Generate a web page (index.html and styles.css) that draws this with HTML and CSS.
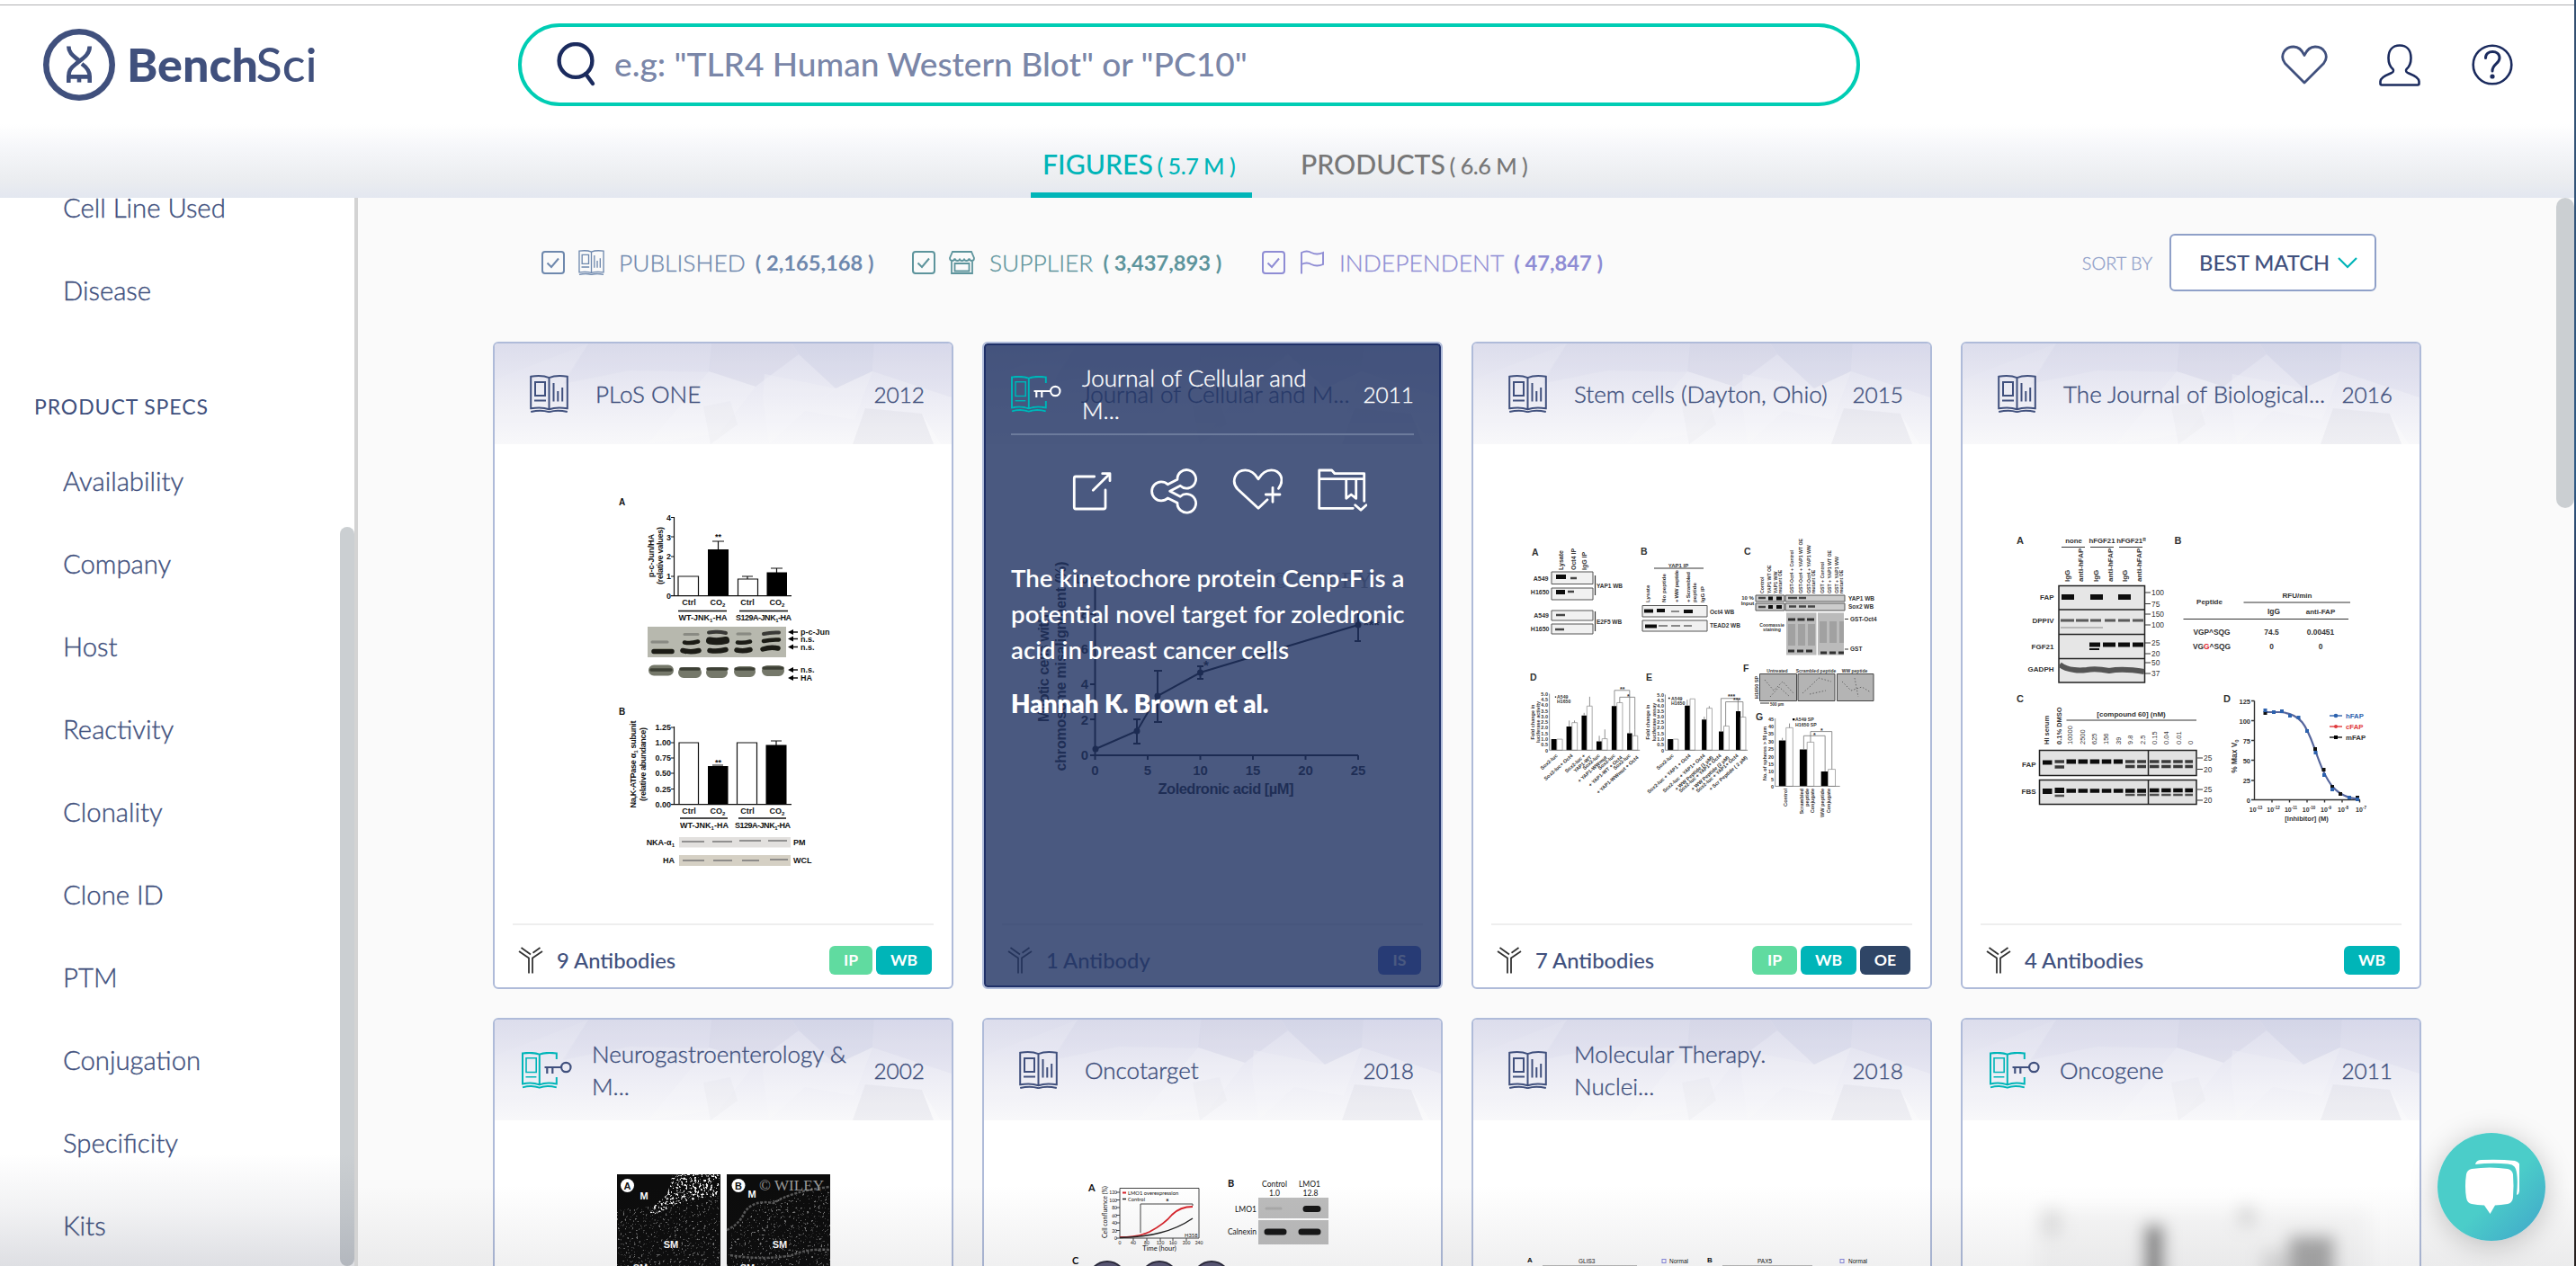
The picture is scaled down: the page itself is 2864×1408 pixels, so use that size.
FILE: index.html
```html
<!DOCTYPE html>
<html lang="en">
<head>
<meta charset="utf-8">
<title>BenchSci</title>
<link rel="stylesheet" href="styles.css">
</head>
<body>
<svg class="defs" width="0" height="0" aria-hidden="true">
  <symbol id="book" viewBox="0 0 43 42">
    <g fill="none" stroke="currentColor" stroke-width="2">
      <path d="M21.5 3.2C16 .8 8 .8 1.2 1.8V37.2C8 36.2 16 36.2 21.5 38.2C27 36.2 35 36.2 41.8 37.2V1.8C35 .8 27 .8 21.5 3.2V38"/>
      <path d="M1.2 41C8 39.4 16 39.4 21.5 41.2C27 39.4 35 39.4 41.8 41"/>
      <path d="M6 8H17V23H6ZM5 28.5H18M26.5 9V29.5M31.3 18V29.5M36.2 14V29.5"/>
    </g>
  </symbol>
  <symbol id="bookkey" viewBox="0 0 56 41">
    <g fill="none" stroke="#00b5b8" stroke-width="2">
      <path d="M38.8 8V1.4C32 .6 25 .6 19.8 2.6C14 .6 7 .6 1 1.4V35.4C7 34.2 14 34.2 19.8 36.4C25 34.2 32 34.2 38.8 35.4V28M19.8 2.6V36"/>
      <path d="M1 39.4C7 37.6 14 37.6 19.8 39.6C25 37.6 32 37.6 38.8 39.4"/>
      <path stroke-width="1.6" d="M5 6.8H16.2V22.5H5ZM4.5 27.8H16.4"/>
    </g>
    <g fill="none" stroke="currentColor" stroke-width="2.2">
      <circle cx="49.3" cy="17" r="5.2"/>
      <path d="M44 17H25.5M28.3 17V24M34.3 17V24"/>
    </g>
  </symbol>
  <symbol id="antibody" viewBox="0 0 28 30">
    <path fill="none" stroke="#333" stroke-width="1.8" d="M12 29.5V12.5L1 5M3.500 1L14 8.500M16 29.500V12.500L27 5M1.800 5.500L9 10.500M24.500 1L16.500 6.800"/>
  </symbol>
  <symbol id="facets" viewBox="0 0 508 112" preserveAspectRatio="none">
    <g opacity=".28">
      <path fill="#fff" opacity=".25" d="M104 0L60 73L0 112V40Z"/>
      <path fill="#c9cce2" opacity=".35" d="M104 0L75 45L150 30L241 32V0Z"/>
      <path fill="#b3b6d4" opacity=".5" d="M241 0L238 31L290 48L338 12L330 0Z"/>
      <path fill="#fff" opacity=".5" d="M238 31L290 48L250 100L170 112Z"/>
      <path fill="#fff" opacity=".5" d="M300 34L380 50L345 75L305 112L298 60Z"/>
      <path fill="#a9adcf" opacity=".5" d="M338 12L379 50L420 31L422 0H330Z"/>
      <path fill="#fff" opacity=".5" d="M379 50L420 31L400 85L345 75Z"/>
      <path fill="#b6bad8" opacity=".4" d="M422 0L420 31L508 60V0Z"/>
      <path fill="#c4c5d2" opacity=".6" d="M412 72L475 78L492 112H398Z"/>
      <path fill="#fff" d="M475 78L496 112H488Z"/>
      <path fill="#d0d1dd" opacity=".4" d="M232 70L262 64L270 90L240 112Z"/>
    </g>
  </symbol>
</svg>

<header class="header">
  <div class="window-edge"></div>
  <div class="topbar">
    <div class="logo">
      <svg width="312" height="84" viewBox="46 30 312 84" role="img" aria-label="BenchSci">
        <circle cx="88" cy="72" r="36.700" fill="none" stroke="#40507d" stroke-width="6.600"/>
        <g fill="none" stroke="#40507d" stroke-width="4.600">
          <path d="M76.300 51.500C76.300 60 83 63 88 67.500M99.700 51.500C99.700 62 90 66 84.500 71C78 76 76.300 79 76.300 85V92M91 71C96.500 75 99.700 79 99.700 85V92M76.300 85.400H99.700M88 85V91.500"/>
        </g>
        <g fill="#40507d" font-family="Lato, sans-serif" font-size="51.500">
          <text x="141" y="90.500" font-weight="900" textLength="146" lengthAdjust="spacingAndGlyphs">Bench</text>
          <text x="284.500" y="90.500" font-weight="500" textLength="68" lengthAdjust="spacingAndGlyphs">Sci</text>
        </g>
      </svg>
    </div>
    <div class="search">
      <svg width="46" height="50" viewBox="0 0 46 50"><circle cx="22" cy="20.500" r="18.400" fill="none" stroke="#1b2b5e" stroke-width="4.400"/><path d="M33 35L41 46" stroke="#1b2b5e" stroke-width="4.400" stroke-linecap="round"/></svg>
      <span class="placeholder">e.g: "TLR4 Human Western Blot" or "PC10"</span>
    </div>
    <nav class="actions">
      <svg width="52" height="44" viewBox="0 0 52 44"><path fill="none" stroke="#40507d" stroke-width="2.800" stroke-linejoin="round" d="M26 42L4.500 20.500C-2 12 4 2 14 2C20 2 23.500 6 26 11.500C28.500 6 32 2 38 2C48 2 54 12 47.500 20.500Z"/></svg>
      <svg width="46" height="47" viewBox="0 0 46 47"><path fill="none" stroke="#1b2b5e" stroke-width="2.600" stroke-linejoin="round" d="M23 1.500C31 1.500 35.500 7 35.500 15.500C35.500 21 33.500 25.500 30.500 28C29 30 30.500 31.500 33 32.500C38 34.500 44.500 37.500 44.500 41.500V44Q44.500 45.500 43 45.500H3Q1.500 45.500 1.500 44V41.500C1.500 37.500 8 34.500 13 32.500C15.500 31.500 17 30 15.500 28C12.500 25.500 10.500 21 10.500 15.500C10.500 7 15 1.500 23 1.500Z"/></svg>
      <svg width="46" height="46" viewBox="0 0 46 46"><g fill="none" stroke="#1b2b5e" stroke-width="2.600"><circle cx="23" cy="23" r="21.300"/><path stroke-width="3" stroke-linecap="round" d="M15.500 15.500C15.500 6 31 6 31 15.500C31 22 23 22 23 30"/></g><circle cx="23" cy="36" r="2.600" fill="#1b2b5e"/></svg>
    </nav>
  </div>
  <div class="tabs">
    <div class="tab tab-active">FIGURES <small>( 5.7 M )</small></div>
    <div class="tab">PRODUCTS <small>( 6.6 M )</small></div>
  </div>
</header>

<div class="body">
  <aside class="sidebar">
    <ul class="filters-list">
      <li>Cell Line Used</li>
      <li>Disease</li>
      <li class="group">PRODUCT SPECS</li>
      <li>Availability</li>
      <li>Company</li>
      <li>Host</li>
      <li>Reactivity</li>
      <li>Clonality</li>
      <li>Clone ID</li>
      <li>PTM</li>
      <li>Conjugation</li>
      <li>Specificity</li>
      <li>Kits</li>
    </ul>
    <div class="sidebar-thumb"></div>
    <div class="sidebar-fade"></div>
  </aside>

  <main class="main">
    <div class="toolbar">
      <div class="sources">
        <div class="source published">
          <svg width="26" height="26" viewBox="0 0 26 26"><path fill="none" stroke="currentColor" stroke-width="2" d="M4 1H22Q25 1 25 4V22Q25 25 22 25H4Q1 25 1 22V4Q1 1 4 1ZM6.500 13.500L11 18L19 8.500"/></svg>
          <svg width="29" height="28"><use href="#book"/></svg>
          <span>PUBLISHED</span><b>( 2,165,168 )</b>
        </div>
        <div class="source supplier">
          <svg width="26" height="26" viewBox="0 0 26 26"><path fill="none" stroke="currentColor" stroke-width="2" d="M4 1H22Q25 1 25 4V22Q25 25 22 25H4Q1 25 1 22V4Q1 1 4 1ZM6.500 13.500L11 18L19 8.500"/></svg>
          <svg width="29" height="28" viewBox="0 0 29 28"><path fill="none" stroke="currentColor" stroke-width="1.800" d="M4 2H25L28 9Q28 12 25.500 12Q23 12 22.500 9.500Q22 12 19.500 12Q17 12 17 9.500Q17 12 14.500 12Q12 12 12 9.500Q12 12 9.500 12Q7 12 6.500 9.500Q6 12 3.500 12Q1 12 1 9ZM3 12V26H26V12M6.500 15H22.500V23.500H6.500Z"/></svg>
          <span>SUPPLIER</span><b>( 3,437,893 )</b>
        </div>
        <div class="source independent">
          <svg width="26" height="26" viewBox="0 0 26 26"><path fill="none" stroke="currentColor" stroke-width="2" d="M4 1H22Q25 1 25 4V22Q25 25 22 25H4Q1 25 1 22V4Q1 1 4 1ZM6.500 13.500L11 18L19 8.500"/></svg>
          <svg width="29" height="28" viewBox="0 0 29 28"><path fill="none" stroke="currentColor" stroke-width="1.900" d="M3 26.500V3Q9 0 14 3Q20 6 27 3V16Q20 19 14 16Q9 13 3 16"/></svg>
          <span>INDEPENDENT</span><b>( 47,847 )</b>
        </div>
      </div>
      <div class="sort">
        <span class="sort-label">SORT BY</span>
        <div class="select">BEST MATCH
          <svg width="22" height="13" viewBox="0 0 22 13"><path fill="none" stroke="#00b5b8" stroke-width="2.200" d="M1 1L11 11L21 1"/></svg>
        </div>
      </div>
    </div>

    <div class="grid">
      <!-- PLoS ONE -->
      <article class="card">
        <div class="card-head">
          <svg class="facets"><use href="#facets"/></svg>
          <svg class="icon" width="43" height="42"><use href="#book"/></svg>
          <h3>PLoS ONE</h3><time>2012</time>
        </div>
        <svg class="figure" viewBox="550 494 508 533">
          <g stroke="#111" stroke-width="1.200" fill="none">
            <path d="M749.500 575V662.600H880M746 575.500H749.500M746 597H749.500M746 619H749.500M746 641H749.500M746 662.600H749.500M798.500 602V611M792 602H805M831 641V644M825 641H837M863.500 632V637M857 632H870"/>
            <path d="M754 662V641H776.500V662M820.500 662V644H842.500V662" fill="#fff"/>
            <path d="M754 679.500H808M822 679.500H876" stroke-width="1.500"/>
            <path d="M749.500 808V894.600H880M746 809H749.500M746 826H749.500M746 843H749.500M746 860H749.500M746 877.500H749.500M746 894.600H749.500M863 824V829M857 824H869M792 851H804"/>
            <path d="M755 894V826H776.500V894M819.500 894V826H841.500V894" fill="#fff"/>
            <path d="M756 910H809M821 910H874" stroke-width="1.500"/>
          </g>
          <path d="M787 611h23v51.600h-23zM852.500 636.500h22.500v26h-22.500zM787 852h22.500v42.600h-22.500zM851.500 828.500h23v66h-23z"/>
          <rect x="720" y="697" width="154" height="34" fill="#b7b8ae"/>
          <g filter="url(#soft)" stroke-linecap="round" fill="none" stroke="#1a1c16">
            <path stroke-width="5.500" d="M727 724.500H747M759 723.500Q768 726 777 723.500M789 723.500Q798 725 807 722.500M819 723Q827 724.500 834 722.500M848 722Q857 719 865 721"/>
            <path stroke-width="4.500" d="M761 714.500Q768 716 776 713.500M820 714.500Q827 715.500 834 713.500M849 713Q857 711 866 711.500"/>
            <path stroke-width="8" d="M789 712.500Q798 714 807 712"/>
            <path stroke-width="4" stroke-opacity=".8" d="M788 703.500Q798 702 807 704M849 705Q857 703 866 703.500"/>
            <path stroke-width="3" stroke-opacity=".3" d="M761 705.500H776M820 705H834M725 714H742"/>
          </g>
          <g filter="url(#soft)" stroke="#74786a" stroke-width="12" stroke-linecap="round">
            <path d="M727 745.500H743M760 748H774M791 748H803M822 747H834M853 746H866"/>
          </g>
          <g filter="url(#soft)" stroke="#3d4035" stroke-width="3.500" stroke-linecap="round" fill="none"><path d="M724 745H746M757 744H777M787 744H808M818 744H838M849 743H870"/></g>
          <path stroke="#111" stroke-width="1.300" d="M880 703H887M880 710.500H887M880 719.500H887M880 745H887M880 754H887"/>
          <path d="M876 703l6-3v6zM876 710.500l6-3v6zM876 719.500l6-3v6zM876 745l6-3v6zM876 754l6-3v6z"/>
          <rect x="755" y="931" width="124" height="11.500" fill="#e2e0de"/><rect x="755" y="951" width="124" height="12" fill="#d5d0c4"/>
          <path stroke="#777" stroke-width="1.500" filter="url(#soft)" d="M758 936H783M792 936H814M822 935H846M854 935H875M759 957H783M793 957H814M825 957H844M856 956H876"/>
          <g class="fig" font-size="9">
            <text x="688" y="562" font-size="10">A</text><text x="688" y="795" font-size="10">B</text>
            <g text-anchor="end"><text x="746" y="579">4</text><text x="746" y="600.500">3</text><text x="746" y="622">2</text><text x="746" y="644">1</text><text x="746" y="666">0</text>
            <text x="746" y="812">1.25</text><text x="746" y="829">1.00</text><text x="746" y="846">0.75</text><text x="746" y="863">0.50</text><text x="746" y="880.500">0.25</text><text x="746" y="898">0.00</text>
            <text x="750" y="940">NKA-α<tspan class="sub" dy="2">1</tspan></text><text x="750" y="960">HA</text></g>
            <g text-anchor="middle"><text x="798.500" y="600">**</text><text x="798.500" y="851">**</text>
            <text x="766" y="673">Ctrl</text><text x="798" y="673">CO<tspan class="sub" dy="2">2</tspan></text><text x="831" y="673">Ctrl</text><text x="864" y="673">CO<tspan class="sub" dy="2">2</tspan></text>
            <text x="781.500" y="690">WT-JNK<tspan class="sub" dy="2">1</tspan><tspan dy="-2">-HA</tspan></text><text x="849" y="690" textLength="62">S129A-JNK<tspan class="sub" dy="2">1</tspan><tspan dy="-2">-HA</tspan></text>
            <text x="766" y="905">Ctrl</text><text x="798" y="905">CO<tspan class="sub" dy="2">2</tspan></text><text x="831" y="905">Ctrl</text><text x="864" y="905">CO<tspan class="sub" dy="2">2</tspan></text>
            <text x="783" y="921">WT-JNK<tspan class="sub" dy="2">1</tspan><tspan dy="-2">-HA</tspan></text><text x="848" y="921" textLength="62">S129A-JNK<tspan class="sub" dy="2">1</tspan><tspan dy="-2">-HA</tspan></text>
            <text transform="translate(727 618) rotate(-90)">p-c-Jun/HA</text><text transform="translate(737 618) rotate(-90)" textLength="64">(relative values)</text>
            <text transform="translate(707 850) rotate(-90)" textLength="97">Na,K-ATPase α<tspan class="sub" dy="2">1</tspan><tspan dy="-2"> subunit</tspan></text><text transform="translate(718 850) rotate(-90)" textLength="82">(relative abundance)</text></g>
            <text x="890" y="706">p-c-Jun</text><text x="890" y="713.500">n.s.</text><text x="890" y="722.500">n.s.</text><text x="890" y="748">n.s.</text><text x="890" y="757">HA</text>
            <text x="882" y="940">PM</text><text x="882" y="960">WCL</text>
          </g>
        </svg>
        <div class="card-foot"><svg width="28" height="30"><use href="#antibody"/></svg><strong>9 Antibodies</strong><span class="tag ip">IP</span><span class="tag wb">WB</span></div>
      </article>

      <!-- Journal of Cellular and M... (hovered) -->
      <article class="card hovered">
        <div class="card-head key">
          <svg class="facets"><use href="#facets"/></svg>
          <svg class="icon" width="56" height="41"><use href="#bookkey"/></svg>
          <h3>Journal of Cellular and M...</h3><time>2011</time>
        </div>
        <svg class="figure" viewBox="1094 494 508 533">
          <g stroke="#000" stroke-width="2" fill="none">
            <path d="M1217.500 643V840H1510M1212 840H1217.500M1212 800H1217.500M1212 761H1217.500M1212 722H1217.500M1212 683H1217.500M1212 643H1217.500M1217.500 840V845M1276 840V845M1334.500 840V845M1393 840V845M1451.500 840V845M1510 840V845"/>
            <path d="M1218 833L1264 813L1287 774L1334.500 748L1510 695"/>
            <path d="M1264 800V827M1260 800H1268M1260 827H1268M1287 746V803M1283 746H1292M1283 803H1292M1334.500 741V755M1331 741H1338M1331 755H1338M1510 680V713M1506 713H1513"/>
          </g>
          <g><circle cx="1218" cy="833" r="3.500"/><circle cx="1264" cy="813" r="3.500"/><circle cx="1287" cy="774" r="3.500"/><circle cx="1334.500" cy="748" r="3.500"/><circle cx="1510" cy="695" r="3.500"/></g>
          <g class="fig" font-size="15">
            <g text-anchor="end"><text x="1210" y="845">0</text><text x="1210" y="806">2</text><text x="1210" y="766">4</text><text x="1210" y="727">6</text><text x="1210" y="688">8</text><text x="1210" y="649">10</text></g>
            <g text-anchor="middle"><text x="1217.500" y="862">0</text><text x="1276" y="862">5</text><text x="1334.500" y="862">10</text><text x="1393" y="862">15</text><text x="1451.500" y="862">20</text><text x="1510" y="862">25</text>
            <text x="1363" y="883" font-size="16.500" textLength="151">Zoledronic acid [µM]</text>
            <text transform="translate(1166 743) rotate(-90)" font-size="16" textLength="120">Mitotic cells with</text>
            <text transform="translate(1185 741) rotate(-90)" font-size="16" textLength="233">chromosome misalignment (%)</text></g>
            <text x="1338" y="745">*</text><text x="1516" y="700">***</text>
          </g>
          <text x="1414" y="654" font-family="Liberation Serif, serif" font-size="25" fill="#999" textLength="112">© WILEY</text>
        </svg>
        <div class="card-foot"><svg width="28" height="30"><use href="#antibody"/></svg><strong>1 Antibody</strong><span class="tag is">IS</span></div>
        <div class="overlay">
          <div class="overlay-head"><svg width="56" height="41"><use href="#bookkey"/></svg><h3>Journal of Cellular and<br>M...</h3><time>2011</time></div>
          <div class="overlay-actions">
            <svg width="50" height="54" viewBox="0 0 50 54"><path d="M26.700 10H6Q4.300 10 4.300 12V44Q4.300 46 6 46H37Q39 46 39 44V25M25.300 25.300L44 6.700M35.700 6.700H44V14.700"/></svg>
            <svg width="54" height="54" viewBox="0 0 54 54"><path d="M20.300 18.700L31 13.300A10.300 10.300 0 1 1 34.200 20.300L22.700 26.300L34.200 32.300A10.300 10.300 0 1 1 31 39.300L20.300 34A10.500 10.500 0 1 1 20.300 18.700Z"/></svg>
            <svg width="56" height="54" viewBox="0 0 56 54"><path d="M39 35.700L29 45.300L6 24C-2 15 4 2.800 14.500 2.800C21 2.800 25 6 29 12.700C33 6 37 2.800 43.500 2.800C53 2.800 59 13 51.500 23.300M45 22.300V38.300M37.300 30H53"/></svg>
            <svg width="56" height="54" viewBox="0 0 56 54"><path d="M40.300 45.300H2.700V3H16.700L20 6.700H52.700V37.300M2.700 12.700H52.700M32.700 12.700V34.300L38.200 30L43.700 34.300V12.700M42.700 41.700L49 47.300L55 41.700"/></svg>
          </div>
          <p class="overlay-title">The kinetochore protein Cenp-F is a<br>potential novel target for zoledronic<br>acid in breast cancer cells</p>
          <p class="overlay-author">Hannah K. Brown et al.</p>
        </div>
      </article>

      <!-- Stem cells -->
      <article class="card">
        <div class="card-head">
          <svg class="facets"><use href="#facets"/></svg>
          <svg class="icon" width="43" height="42"><use href="#book"/></svg>
          <h3>Stem cells (Dayton, Ohio)</h3><time>2015</time>
        </div>
        <svg class="figure" viewBox="1638 494 508 533">
          <g fill="#f1f1f1" stroke="#555" stroke-width="1">
            <path d="M1725 636h46v13.500h-46zM1725 654h46v13h-46zM1725 679h46v11h-46zM1725 694h46v11h-46zM1826 673.500h72v12.500h-72zM1826 690h72v12h-72z"/>
            <path fill="#ccc" d="M1952 662h32v7h-32zM1952 671h32v8h-32zM1985 662h66v7h-66zM1985 671h66v8h-66z"/>
          </g>
          <path fill="#bbb" d="M1986 681.500h33.500v47h-33.500zM2021 681.500h29v47h-29z"/>
          <g filter="url(#soft)">
            <path stroke="#333" stroke-width="3" stroke-dasharray="8 2.500" d="M1988 689H2018"/>
            <path stroke="#888" stroke-width="24" stroke-dasharray="8 3" opacity=".5" d="M1988 706H2018M2023 703H2050"/>
            <path stroke="#333" stroke-width="3" stroke-dasharray="7 3" d="M1988 724H2018M2024 726H2050"/>
            <path stroke="#111" stroke-width="5" d="M1730 641.500H1741M1730 658.500H1740"/>
            <path stroke="#444" stroke-width="2.400" d="M1746 643H1753M1743 658H1750M1730 684H1740M1729 700H1739M1955 665H1963M1955 675H1963M1988 665H1998M2000 665H2008M1989 674.500H1997M2000 674.500H2008M2010 674.500H2018"/>
            <path stroke="#111" stroke-width="4" d="M1828 679.500H1838M1829 696.500H1842M1842 679H1851M1872 680H1882M1966 665.500H1971M1975 665.500H1981M1966 675H1971M1975 675H1981"/>
            <path stroke="#888" stroke-width="2" d="M1844 696H1854M1858 680H1867M1858 696H1868M1872 696H1881"/>
          </g>
          <g stroke="#333" stroke-width="1.200"><path d="M1773.500 640V662M1773.500 680V702M1839 632H1894M2051 688.500H2055M2051 722H2055M1957 782H1967"/></g>
          <g fill="#b4b4b4" stroke="#444"><path d="M1956.500 749.500h41v30h-41zM1999 749.500h41v30h-41zM2042.500 749.500h40.500v30h-40.500z"/></g>
          <g fill="none" stroke="#333" stroke-width="1" stroke-dasharray="1.500 2" opacity=".6"><path d="M1962 756L1972 768L1982 758L1994 771M1968 775L1978 764L1990 775M2004 771L2014 762L2022 754L2036 758M2012 772L2030 768M2048 758L2058 768L2070 764L2080 770M2062 754L2066 775"/></g>
          <g transform="translate(1620 370) scale(.3444 .4719)">
            <path d="M304 958h18v26h-18zM353 928h18v56h-18zM402 902h17v82h-17zM450 963h17v21h-17zM499 880h17v104h-17zM549 944h16v40h-16zM680 958h18v26h-18zM735 879h17v105h-17zM790 912h16v72h-16zM845 940h15v44h-15zM900 892h15v92h-15zM1039 961h23v108h-23zM1106 982h24v87h-24zM1175 1034h22v35h-22zM316 857h4v3h-4zM682 860h5v3h-5zM1083 909h7v5h-7z"/>
            <g fill="#fff" stroke="#999" stroke-width="2"><path d="M322 958h18v26h-18zM371 919h17v65h-17zM419 880h17v104h-17zM468 957h17v27h-17zM516 872h18v112h-18zM566 950h17v34h-17zM698 958h16v26h-16zM752 863h16v121h-16zM806 885h17v99h-17zM861 927h17v57h-17zM915 906h17v78h-17zM1062 931h22v138h-22zM1130 965h22v104h-22zM1198 1029h23v40h-23z"/></g>
            <path fill="none" stroke="#777" stroke-width="2" d="M298 851V984H590M672 853V984H938M1027 909V1069H1236M362 914V928M379 914V919M428 858V880M410 896V902M459 950V963M477 935V957M508 843V880M508 843H557V935M525 859H574V935M525 859V872M557 935V944M574 935V950M743 865V879M798 905V912M814 880V885M852 862V940M852 862H907V892M867 870H923V906M867 870V927M1050 955V961M1073 921V931M1119 950V982M1119 950H1188V1034M1141 940H1210V1029M1141 940V965"/>
          </g>
          <g class="fig soft" font-size="7">
            <g font-size="10.500"><text x="1703" y="618">A</text><text x="1824" y="617">B</text><text x="1939" y="617">C</text><text x="1701" y="757">D</text><text x="1830" y="757">E</text><text x="1938" y="747">F</text><text x="1952" y="801">G</text></g>
            <g text-anchor="end"><text x="1721.500" y="646">A549</text><text x="1722.500" y="661">H1650</text><text x="1722" y="687">A549</text><text x="1722.500" y="702">H1650</text></g>
            <g font-size="6.500"><text x="1775" y="653.500">YAP1 WB</text><text x="1775" y="693.500">E2F5 WB</text><text x="1901" y="683">Oct4 WB</text><text x="1901" y="697.500">TEAD2 WB</text><text x="2055" y="668">YAP1 WB</text><text x="2055" y="676.500">Sox2 WB</text><text x="2057" y="691">GST-Oct4</text><text x="2057" y="724">GST</text></g>
            <text transform="translate(1738 634) rotate(-90)">Lysate</text><text transform="translate(1752 634) rotate(-90)">Oct4 IP</text><text transform="translate(1764 634) rotate(-90)">IgG IP</text>
            <g font-size="6.200"><text transform="translate(1834 670) rotate(-90)">Lysate</text><text transform="translate(1852 670) rotate(-90)">No peptide</text><text transform="translate(1866 670) rotate(-90)" textLength="36">+ WW peptide</text><text transform="translate(1879 670) rotate(-90)" textLength="34">+ Scrambled</text><text transform="translate(1886 670) rotate(-90)">peptide</text><text transform="translate(1895 670) rotate(-90)">IgG IP</text></g>
            <g font-size="5.200"><text transform="translate(1961 660) rotate(-90)">Control</text><text transform="translate(1969 660) rotate(-90)">YAP1 WT OE</text><text transform="translate(1976 660) rotate(-90)">YAP1 WW</text><text transform="translate(1981 660) rotate(-90)">mutant OE</text><text transform="translate(1994 660) rotate(-90)">GST-Oct4 + Control</text><text transform="translate(2004 660) rotate(-90)">GST-Oct4 + YAP1 WT OE</text><text transform="translate(2013 660) rotate(-90)">GST-Oct4 + YAP1 WW</text><text transform="translate(2018 660) rotate(-90)">mutant OE</text><text transform="translate(2028 660) rotate(-90)">GST + Control</text><text transform="translate(2036 660) rotate(-90)">GST + YAP1 WT OE</text><text transform="translate(2044 660) rotate(-90)">GST + YAP1 WW</text><text transform="translate(2049 660) rotate(-90)">mutant OE</text></g>
            <g text-anchor="middle" font-size="6"><text x="1866" y="631">YAP1 IP</text><text x="1943" y="667">10 %</text><text x="1943" y="673">Input</text><text x="1970" y="697" font-size="5.200">Coomassie</text><text x="1970" y="702" font-size="5.200">staining</text><text x="1976" y="747.500" font-size="5">Untreated</text><text x="2019" y="747.500" font-size="5">Scrambled peptide</text><text x="2062" y="747.500" font-size="5">WW peptide</text></g>
            <text transform="translate(1955 777) rotate(-90)" font-size="5.500">H1650 SP</text><text x="1968" y="785" font-size="4.500">500 µm</text>
            <g font-size="5.500" text-anchor="end"><text x="1721" y="773.500">5.0</text><text x="1721" y="780">4.5</text><text x="1721" y="786">4.0</text><text x="1721" y="792.500">3.5</text><text x="1721" y="799">3.0</text><text x="1721" y="805">2.5</text><text x="1721" y="811">2.0</text><text x="1721" y="817.500">1.5</text><text x="1721" y="824">1.0</text><text x="1721" y="830">0.5</text><text x="1721" y="836.500">0</text>
            <text x="1850" y="775">5.0</text><text x="1850" y="781">4.5</text><text x="1850" y="787">4.0</text><text x="1850" y="793">3.5</text><text x="1850" y="799">3.0</text><text x="1850" y="805">2.5</text><text x="1850" y="811">2.0</text><text x="1850" y="817.500">1.5</text><text x="1850" y="824">1.0</text><text x="1850" y="830">0.5</text><text x="1850" y="836.500">0</text>
            <text x="1972" y="801.500">45</text><text x="1972" y="810">40</text><text x="1972" y="818">35</text><text x="1972" y="826.500">30</text><text x="1972" y="835">25</text><text x="1972" y="843.500">20</text><text x="1972" y="851.500">15</text><text x="1972" y="860">10</text><text x="1972" y="868.500">5</text><text x="1972" y="877">0</text></g>
            <g font-size="5.200"><text x="1731" y="776.500">A549</text><text x="1731" y="782">H1650</text><text x="1858" y="778.500">A549</text><text x="1858" y="784">H1650</text><text x="1996" y="801.500">A549 SP</text><text x="1996" y="807.500">H1650 SP</text></g>
            <g font-size="5.500" text-anchor="middle"><text transform="translate(1706 803) rotate(-90)">Fold change in</text><text transform="translate(1712 803) rotate(-90)">luciferase activity</text><text transform="translate(1834 803) rotate(-90)">Fold change in</text><text transform="translate(1841 803) rotate(-90)">luciferase assay</text><text transform="translate(1964 838) rotate(-90)">No. of spheres &gt; 50 µm</text></g>
            <g font-size="5.600" text-anchor="end"><text transform="translate(1732 841) rotate(-42)">Sox2-luc</text><text transform="translate(1749 841) rotate(-42)">Sox2-luc+ Oct4</text><text transform="translate(1763 841) rotate(-42)">Sox2-luc +</text><text transform="translate(1770 843) rotate(-42)">YAP1-WT</text><text transform="translate(1779 841) rotate(-42)">Sox2-luc</text><text transform="translate(1787 843) rotate(-42)">+ YAP1-WWmut</text><text transform="translate(1796 841) rotate(-42)">Sox2-luc</text><text transform="translate(1804 843) rotate(-42)">+ YAP1-WT + Oct4</text><text transform="translate(1813 841) rotate(-42)">Sox2-luc</text><text transform="translate(1822 843) rotate(-42)">+ YAP1-WWmut + Oct4</text>
            <text transform="translate(1861 841) rotate(-42)">Sox2-luc</text><text transform="translate(1880 841) rotate(-42)">Sox2-luc + YAP1 + Oct4</text><text transform="translate(1896 841) rotate(-42)">Sox2-luc + YAP1+ Oct4</text><text transform="translate(1905 843) rotate(-42)">+ WW Peptide (1 µM)</text><text transform="translate(1914 841) rotate(-42)">Sox2-luc + YAP1+ Oct4</text><text transform="translate(1923 843) rotate(-42)">+ WW Peptide (2 µM)</text><text transform="translate(1933 841) rotate(-42)">Sox2-luc + YAP1+ Oct4</text><text transform="translate(1943 843) rotate(-42)">+ Scr Peptide ( 2 µM)</text>
            <text transform="translate(1987 877) rotate(-90)">Control</text><text transform="translate(2005 877) rotate(-90)">Scrambled</text><text transform="translate(2011 877) rotate(-90)">peptide</text><text transform="translate(2017 877) rotate(-90)">Conjugate</text><text transform="translate(2028 877) rotate(-90)">WW peptide</text><text transform="translate(2035 877) rotate(-90)">Conjugate</text></g>
            <text x="1801" y="769">**</text><text x="1809" y="777">*</text><text x="1921" y="777">***</text><text x="1927" y="781">***</text><text x="2016" y="820">*</text><text x="2024" y="815">*</text>
          </g>
        </svg>
        <div class="card-foot"><svg width="28" height="30"><use href="#antibody"/></svg><strong>7 Antibodies</strong><span class="tag ip wide">IP</span><span class="tag wb">WB</span><span class="tag oe">OE</span></div>
      </article>

      <!-- The Journal of Biological... -->
      <article class="card">
        <div class="card-head">
          <svg class="facets"><use href="#facets"/></svg>
          <svg class="icon" width="43" height="42"><use href="#book"/></svg>
          <h3>The Journal of Biological...</h3><time>2016</time>
        </div>
        <svg class="figure" viewBox="2182 494 508 533">
          <path fill="#e6e6e6" stroke="#222" stroke-width="1.500" d="M2289 651.500h95.500v107.500h-95.500zM2289 678H2384.500M2289 705.500H2384.500M2289 732.500H2384.500"/>
          <path fill="#e2e2e2" stroke="#222" stroke-width="1.500" d="M2267.500 834.500h174.500v28h-174.500zM2267.500 867.500h174.500v27h-174.500zM2388.500 834.500V862.500M2388.500 867.500V894.500"/>
          <g filter="url(#soft)" stroke="#111" fill="none">
            <path stroke-width="6" d="M2292 664H2306M2324 664H2338M2355 664H2369"/>
            <path stroke-width="3" stroke-opacity=".65" d="M2291 690H2306M2308 690H2322M2324 690H2336M2340 690H2352M2355 690H2368M2371 690H2383"/>
            <path stroke-width="2" stroke-opacity=".2" d="M2291 698H2338"/>
            <path stroke-width="5" d="M2323 717H2335M2338 717H2352M2355 717H2368M2371 717H2383"/><path stroke-width="2" d="M2323 722H2334"/>
            <path stroke="#555" stroke-width="6" d="M2290 739Q2296 744 2306 745Q2312 746 2320 745Q2330 743 2345 746Q2360 743 2384 747"/>
            <g stroke-dasharray="10.500 2.600"><path stroke-width="5" d="M2271 848H2282M2297.500 847H2360"/><path stroke-width="3.500" stroke-opacity=".8" d="M2284.500 847H2296M2363 847H2386M2390 847H2438M2284.500 853H2296M2363 852.500H2386M2390 852.500H2438"/>
            <path stroke-width="6" d="M2271 880H2282M2284.500 879H2296"/><path stroke-width="4.500" d="M2297.500 879.500H2386M2390 879H2438"/><path stroke-width="2.500" stroke-opacity=".7" d="M2284.500 885H2296M2363 884H2386M2390 884H2438"/></g>
          </g>
          <g stroke="#333" stroke-width="1.200" fill="none">
            <path d="M2292 608.500H2318M2324 608.500H2350M2356 608.500H2382M2297.500 801H2442M2494.500 670H2613M2427.500 688.500H2611M2385 659h6M2385 671.500h6M2385 683h6M2385 695h6M2385 715h6M2385 727h6M2385 737h6M2385 749h6M2443 843h6M2443 855.500h6M2443 878h6M2443 890h6"/>
            <path stroke-width="1.400" d="M2506.500 779.500V889.500H2624M2503 779.500h3.500M2503 801.500h3.500M2503 823.500h3.500M2503 845.500h3.500M2503 868h3.500M2503 889.500h3.500M2526 889.500v3M2545.500 889.500v3M2565 889.500v3M2584.500 889.500v3M2604 889.500v3M2623.500 889.500v3"/>
          </g>
          <path fill="none" stroke="#55659c" stroke-width="2.200" d="M2518 792H2534C2560 793 2565 810 2574 834C2586 870 2596 887 2623 888.500"/>
          <path fill="#111" d="M2516.500 791h4v4h-4zM2572 831h4v4h-4zM2581.500 854h4v4h-4zM2591 873h4v4h-4zM2600 881h4v4h-4zM2619 885h4v4h-4z"/>
          <path fill="#2d62ae" d="M2516.500 788h4v4h-4zM2526 790h4v4h-4zM2535 789h4v4h-4zM2544 794h4v4h-4zM2553.500 796h4v4h-4zM2563 811h4v4h-4zM2572.500 835h4v4h-4zM2582 860h4v4h-4zM2591 876h4v4h-4zM2610 885h4v4h-4zM2619 887h4v4h-4z"/>
          <g stroke-width="1.400"><path stroke="#2d62ae" d="M2590 796H2604"/><path stroke="#e0383c" d="M2590 808H2604"/><path stroke="#111" d="M2590 820H2604"/></g>
          <circle cx="2597" cy="796" r="2.300" fill="#2d62ae"/><circle cx="2597" cy="808" r="2" fill="#e0383c"/><rect x="2595" y="818" width="4" height="4"/>
          <g class="fig soft" font-size="8.400">
            <g font-size="11"><text x="2242" y="604.500">A</text><text x="2417.500" y="604.500">B</text><text x="2242" y="780.500">C</text><text x="2472" y="780.500">D</text></g>
            <g text-anchor="middle"><text x="2305.500" y="604" font-size="7.800">none</text><text x="2337" y="604" font-size="7.800">hFGF21</text><text x="2369.500" y="604" font-size="7.800">hFGF21<tspan font-size="5" dy="-2">R</tspan></text>
            <text x="2456.500" y="672" font-size="8">Peptide</text><text x="2554" y="665" font-size="8">RFU/min</text><text x="2528" y="683">IgG</text><text x="2580" y="683" font-size="8">anti-FAP</text><text x="2459" y="705.500">VGP^SQG</text><text x="2525.500" y="705.500">74.5</text><text x="2580" y="705.500">0.00451</text><text x="2459" y="721.500">VG<tspan fill="#e0262b">G</tspan>^SQG</text><text x="2525.500" y="721.500">0</text><text x="2580" y="721.500">0</text>
            <text x="2369.500" y="797" font-size="8">[compound 60] (nM)</text><text x="2564.500" y="913" font-size="7.500">[Inhibitor] (M)</text><text transform="translate(2487 841) rotate(-90)">% Max V<tspan class="sub" dy="2">0</tspan></text></g>
            <text transform="translate(2301 647) rotate(-90)" font-size="8">IgG</text><text transform="translate(2316 647) rotate(-90)" font-size="8">anti-hFAP</text><text transform="translate(2333 647) rotate(-90)" font-size="8">IgG</text><text transform="translate(2348.500 647) rotate(-90)" font-size="8">anti-hFAP</text><text transform="translate(2364.500 647) rotate(-90)" font-size="8">IgG</text><text transform="translate(2380.500 647) rotate(-90)" font-size="8">anti-hFAP</text>
            <g text-anchor="end" font-size="8"><text x="2283.500" y="667">FAP</text><text x="2283.500" y="693">DPPIV</text><text x="2283.500" y="721.500">FGF21</text><text x="2283.500" y="746.500">GADPH</text><text x="2263.500" y="852.500">FAP</text><text x="2263.500" y="883">FBS</text></g>
            <g font-weight="400"><text x="2392" y="662">100</text><text x="2392" y="674.500">75</text><text x="2392" y="686">150</text><text x="2392" y="698">100</text><text x="2392" y="718">25</text><text x="2392" y="730">20</text><text x="2392" y="740">50</text><text x="2392" y="752">37</text><text x="2450" y="846">25</text><text x="2450" y="858.500">20</text><text x="2450" y="881">25</text><text x="2450" y="893">20</text></g>
            <text transform="translate(2278 828) rotate(-90)" font-size="7.500">HI serum</text><text transform="translate(2291.500 828) rotate(-90)" font-size="7.500">0.1% DMSO</text>
            <g font-weight="400" font-size="7.500"><text transform="translate(2304 828) rotate(-90)">10000</text><text transform="translate(2317.500 828) rotate(-90)">2500</text><text transform="translate(2331 828) rotate(-90)">625</text><text transform="translate(2344 828) rotate(-90)">156</text><text transform="translate(2357.500 828) rotate(-90)">39</text><text transform="translate(2370.500 828) rotate(-90)">9.8</text><text transform="translate(2384.500 828) rotate(-90)">2.5</text><text transform="translate(2397.500 828) rotate(-90)">0.15</text><text transform="translate(2411 828) rotate(-90)">0.04</text><text transform="translate(2424.500 828) rotate(-90)">0.01</text><text transform="translate(2437.500 828) rotate(-90)">0</text></g>
            <g text-anchor="end" font-size="7.500"><text x="2502" y="782.500">125</text><text x="2502" y="804.500">100</text><text x="2502" y="826.500">75</text><text x="2502" y="848.500">50</text><text x="2502" y="871">25</text><text x="2502" y="892.500">0</text></g>
            <g text-anchor="middle" font-size="7"><text x="2508" y="903">10<tspan class="sup" dy="-3">-13</tspan></text><text x="2527.500" y="903">10<tspan class="sup" dy="-3">-12</tspan></text><text x="2547" y="903">10<tspan class="sup" dy="-3">-11</tspan></text><text x="2567" y="903">10<tspan class="sup" dy="-3">-10</tspan></text><text x="2586" y="903">10<tspan class="sup" dy="-3">-9</tspan></text><text x="2605" y="903">10<tspan class="sup" dy="-3">-8</tspan></text><text x="2625" y="903">10<tspan class="sup" dy="-3">-7</tspan></text></g>
            <g font-size="7.800"><text x="2608" y="799" fill="#2d62ae">hFAP</text><text x="2608" y="811" fill="#e0383c">cFAP</text><text x="2608" y="823">mFAP</text></g>
          </g>
        </svg>
        <div class="card-foot"><svg width="28" height="30"><use href="#antibody"/></svg><strong>4 Antibodies</strong><span class="tag wb">WB</span></div>
      </article>

      <!-- Neurogastroenterology & M... -->
      <article class="card">
        <div class="card-head key">
          <svg class="facets"><use href="#facets"/></svg>
          <svg class="icon" width="56" height="41"><use href="#bookkey"/></svg>
          <h3>Neurogastroenterology &amp;<br>M...</h3><time>2002</time>
        </div>
        <svg class="figure" viewBox="550 1246 508 533">
          <defs>
            <filter id="soft" filterUnits="userSpaceOnUse" x="540" y="480" width="2200" height="1300"><feGaussianBlur stdDeviation=".7"/></filter>
            <filter id="speckle" x="0" y="0" width="100%" height="100%"><feTurbulence type="fractalNoise" baseFrequency=".4" numOctaves="3" seed="4"/><feColorMatrix values="0 0 0 0 1  0 0 0 0 1  0 0 0 0 1  8 0 0 0 -4.3"/><feComposite in2="SourceAlpha" operator="in"/></filter>
            <filter id="sparse" x="0" y="0" width="100%" height="100%"><feTurbulence type="fractalNoise" baseFrequency=".4" numOctaves="3" seed="9"/><feColorMatrix values="0 0 0 0 1  0 0 0 0 1  0 0 0 0 1  8 0 0 0 -5"/><feComposite in2="SourceAlpha" operator="in"/></filter>
            <filter id="blob" x="-100%" y="-100%" width="300%" height="300%"><feGaussianBlur stdDeviation="9"/></filter>
          </defs>
          <path fill="#0c0c0c" d="M686 1306h115v110h-115zM808 1306h115v110h-115z"/>
          <path filter="url(#speckle)" opacity=".95" d="M748 1306H800V1330L762 1336L724 1352L722 1346L742 1328Z"/>
          <path filter="url(#sparse)" opacity=".45" d="M686 1345L762 1338L800 1332V1408H686ZM815 1365L850 1335L923 1322V1408H808Z"/>
          <path fill="none" stroke="#777" stroke-width="2.500" stroke-dasharray="3 1.500" opacity=".7" d="M808 1368Q822 1362 828 1348Q838 1334 860 1338Q880 1325 922 1320M812 1396Q850 1402 880 1396Q900 1388 922 1390"/>
          <ellipse cx="697.500" cy="1318.500" rx="7.500" ry="7.500" fill="#fff"/><ellipse cx="821" cy="1318.500" rx="7.500" ry="7.500" fill="#fff"/>
          <g class="fig" font-size="11" text-anchor="middle"><text x="697.500" y="1322.500">A</text><text x="821" y="1322.500">B</text>
          <g style="fill:#fff"><text x="716" y="1334">M</text><text x="836" y="1332">M</text><text x="746" y="1388">SM</text><text x="867" y="1388">SM</text><text x="712" y="1414">SM</text><text x="831" y="1414">SM</text></g></g>
          <text x="844" y="1323.500" font-family="Liberation Serif, serif" font-size="17" fill="#999" textLength="72">© WILEY</text>
        </svg>
      </article>

      <!-- Oncotarget -->
      <article class="card">
        <div class="card-head">
          <svg class="facets"><use href="#facets"/></svg>
          <svg class="icon" width="43" height="42"><use href="#book"/></svg>
          <h3>Oncotarget</h3><time>2018</time>
        </div>
        <svg class="figure" viewBox="1094 1246 508 533">
          <g fill="none" stroke="#444"><path d="M1245 1321.500H1333V1377H1245ZM1241 1377h4M1241 1368.500h4M1241 1360h4M1241 1351.500h4M1241 1343h4M1241 1334.500h4M1241 1326h4M1260 1377v3M1275 1377v3M1290 1377v3M1304 1377v3M1319 1377v3"/><path d="M1268 1371V1339H1326V1341"/>
          <path stroke="#d8252c" stroke-width="1.800" d="M1245 1376Q1265 1376 1278 1370Q1295 1361 1303 1351Q1312 1342 1326 1342M1248 1326.500h4"/><path stroke="#222" stroke-width="1.500" d="M1245 1376.500Q1272 1376 1290 1371Q1310 1366 1326 1355M1248 1333.500h4"/></g>
          <path fill="#bcbcbc" d="M1399 1332h78v23h-78zM1399 1357h78v27h-78z"/>
          <g filter="url(#soft)" stroke="#141414" stroke-linecap="round" stroke-width="7"><path d="M1452 1344.500H1465M1409 1370H1427M1447 1370H1465"/><path stroke="#a9a9a9" stroke-width="3" d="M1408 1344H1424"/></g>
          <g fill="#5b5877" stroke="#29283a" stroke-width="2"><circle cx="1231" cy="1424" r="21"/><circle cx="1289" cy="1424" r="21"/><circle cx="1347" cy="1424" r="21"/></g>
          <g class="fig carlito" font-size="8.500">
            <g font-size="11"><text x="1210" y="1324.500">A</text><text x="1365" y="1320">B</text><text x="1192" y="1406">C</text></g>
            <g font-weight="400"><g text-anchor="middle"><text x="1417" y="1320">Control</text><text x="1417" y="1329.500">1.0</text><text x="1456" y="1320">LMO1</text><text x="1457" y="1329.500">12.8</text><text x="1289" y="1391" font-size="7.500">Time (hour)</text><text transform="translate(1231 1348) rotate(-90)" font-size="7" textLength="58">Cell confluence (%)</text></g>
            <g text-anchor="end"><text x="1397" y="1348">LMO1</text><text x="1397" y="1373">Calnexin</text></g>
            <g font-size="5" text-anchor="end"><text x="1242" y="1379">0</text><text x="1242" y="1370.500">20</text><text x="1242" y="1362">40</text><text x="1242" y="1353.500">60</text><text x="1242" y="1345">80</text><text x="1242" y="1336.500">100</text><text x="1242" y="1328">120</text></g>
            <g font-size="5" text-anchor="middle"><text x="1245" y="1384">0</text><text x="1260" y="1384">40</text><text x="1275" y="1384">80</text><text x="1290" y="1384">120</text><text x="1304" y="1384">160</text><text x="1319" y="1384">200</text><text x="1333" y="1384">240</text></g>
            <text x="1254" y="1329" font-size="5.800">LMO1 overexpression</text><text x="1254" y="1336" font-size="5.800">Control</text><text x="1317" y="1375.500" font-size="5.800">H358</text></g>
            <text x="1296" y="1340" font-size="9">*</text>
          </g>
        </svg>
      </article>

      <!-- Molecular Therapy. Nuclei... -->
      <article class="card">
        <div class="card-head">
          <svg class="facets"><use href="#facets"/></svg>
          <svg class="icon" width="43" height="42"><use href="#book"/></svg>
          <h3>Molecular Therapy.<br>Nuclei...</h3><time>2018</time>
        </div>
        <svg class="figure" viewBox="1638 1246 508 533">
          <path stroke="#bbb" d="M1715 1407.500H1820M1915 1407.500H2015"/>
          <g fill="#fff" stroke="#8a8ae0"><rect x="1848" y="1400.500" width="4" height="4"/><rect x="2046" y="1400.500" width="4" height="4"/></g>
          <g class="fig" font-size="8"><text x="1698" y="1403.500">A</text><text x="1898" y="1403.500">B</text><g font-size="6.500" font-weight="400"><text x="1755" y="1405">GLIS3</text><text x="1856" y="1405">Normal</text><text x="1954" y="1405">PAX5</text><text x="2055" y="1405">Normal</text></g></g>
        </svg>
      </article>

      <!-- Oncogene -->
      <article class="card">
        <div class="card-head key">
          <svg class="facets"><use href="#facets"/></svg>
          <svg class="icon" width="56" height="41"><use href="#bookkey"/></svg>
          <h3>Oncogene</h3><time>2011</time>
        </div>
        <svg class="figure" viewBox="2182 1246 508 533">
          <g filter="url(#blob)"><rect x="2264" y="1345" width="370" height="90" fill="#f8f8f8"/><rect x="2270" y="1345" width="22" height="30" fill="#e2e2e2"/><rect x="2384" y="1362" width="22" height="80" fill="#808080"/><rect x="2488" y="1342" width="20" height="22" fill="#ddd"/><rect x="2544" y="1374" width="52" height="60" fill="#a8a8a8"/><rect x="2515" y="1390" width="30" height="50" fill="#ddd"/></g>
        </svg>
      </article>
    </div>
    <div class="main-thumb"></div>
    <div class="main-fade"></div>
    <div class="chat"><svg width="62" height="68" viewBox="2737 1286 62 68"><path fill="#fff" d="M2750 1295Q2751 1290 2757 1290Q2777 1289 2794 1291Q2799 1292 2800 1297Q2803 1313 2798 1328L2796 1329Q2798 1309 2795 1300Q2793 1295 2786 1294.500Q2768 1293 2750 1295Z"/><path fill="#fff" d="M2746 1300Q2766 1297 2786 1300Q2791 1301 2792 1306Q2793 1319 2792 1332Q2791 1338 2786 1339Q2778 1340 2772 1340.500L2766.500 1350L2760 1340.500Q2752 1340 2746 1339Q2741 1338 2740 1332Q2738 1319 2740 1306Q2741 1301 2746 1300Z"/></svg></div>
  </main>
</div>
<div class="desktop-edge"></div>
</body>
</html>
```
FILE: styles.css
```css
* { box-sizing: border-box; }
body {
  margin: 0;
  width: 2864px;
  height: 1408px;
  overflow: hidden;
  position: relative;
  background: #fff;
  color: #40507d;
  font-family: Lato, sans-serif;
}
h3, p, ul { margin: 0; padding: 0; }
svg { display: block; flex: none; }
.defs { position: absolute; }

/* Header */
.header { height: 220px; background: #fff; }
.window-edge { height: 6px; border-bottom: 1px solid #b0b0b2; }
.topbar {
  display: grid;
  grid-template-columns: 576px 1492px 1fr;
  align-items: center;
  height: 132px;
}
.logo { padding-left: 46px; }
.search {
  display: flex;
  align-items: center;
  height: 92px;
  padding-left: 38px;
  border: 4px solid #00cdb4;
  border-radius: 46px;
  background: #fff;
}
.placeholder {
  margin-left: 19px;
  padding-bottom: 3px;
  font-size: 37.1px;
  font-weight: 500;
  color: #7a86a8;
  white-space: nowrap;
}
.search svg { margin-top: -1px; }
.actions {
  display: flex;
  justify-content: flex-end;
  align-items: center;
  gap: 57px;
  padding-right: 70px;
}
.tabs {
  display: flex;
  height: 82px;
  padding-left: 1146px;
  background: linear-gradient(#fff, #f6f7fa 30%, #ebedf0 75%, #e3e7f0);
}
.tab {
  height: 82px;
  padding: 0 15px 0 13px;
  border-bottom: 6px solid transparent;
  font-size: 30.2px;
  font-weight: 500;
  line-height: 89px;
  color: #777;
  white-space: nowrap;
}
.tab small { margin-left: -3px; font-size: 25.2px; letter-spacing: -.5px; }
.tab-active { width: 246px; margin-right: 41px; color: #00b5b8; border-color: #00b5b8; }

/* Body */
.body { display: flex; height: 1188px; }
.sidebar {
  position: relative;
  width: 398px;
  border-right: 4px solid #d3d3d3;
  overflow: hidden;
}
.filters-list { list-style: none; margin-top: -35px; }
.filters-list li {
  height: 92px;
  padding-left: 70px;
  font-size: 29.3px;
  font-weight: 300;
  line-height: 92px;
  -webkit-text-stroke: .4px currentColor;
}
.filters-list .group {
  height: 120px;
  padding: 45px 0 0 38px;
  font-size: 23px;
  font-weight: 400;
  letter-spacing: .9px;
  line-height: 76px;
  -webkit-text-stroke: 0;
}
.sidebar-thumb {
  position: absolute;
  top: 366px; right: 0; bottom: 0;
  width: 16px;
  border-radius: 8px;
  background: #cbcfd2;
}
.sidebar-fade, .main-fade {
  position: absolute;
  left: 0; right: 0; bottom: 0;
  height: 125px;
  background: linear-gradient(rgba(60, 65, 90, 0), rgba(60, 65, 90, .07) 50%, rgba(60, 65, 90, .17));
}
.main-fade { height: 90px; background: linear-gradient(rgba(40, 40, 50, 0), rgba(40, 40, 50, .07)); }
.main {
  position: relative;
  flex: 1;
  padding: 40px 172px 0 150px;
  background: #fafafa;
  overflow: hidden;
}
.main-thumb {
  position: absolute;
  top: 0; right: 2px;
  width: 20px;
  height: 345px;
  border-radius: 10px;
  background: #cbcfd2;
}

/* Toolbar */
.toolbar {
  display: flex;
  justify-content: space-between;
  height: 64px;
  margin-bottom: 56px;
  padding: 0 50px 0 54px;
}
.sources { display: grid; grid-template-columns: 412px 389px auto; align-items: center; }
.source {
  display: grid;
  grid-template-columns: 26px 28px auto auto;
  align-items: center;
  justify-content: start;
  white-space: nowrap;
}
.source svg + svg { margin-left: 15px; }
.source span { margin-left: 32px; font-size: 26.4px; font-weight: 300; -webkit-text-stroke: .3px currentColor; }
.source b { margin-left: 11px; font-size: 23.7px; font-weight: 700; }
.published { color: #6e88ad; }
.supplier { color: #5d949c; }
.independent { color: #8e8cd4; }
.sort { display: flex; align-items: center; gap: 19px; }
.sort-label { font-size: 19.9px; font-weight: 300; color: #8d9dc8; -webkit-text-stroke: .3px currentColor; }
.select {
  display: flex;
  align-items: center;
  justify-content: space-between;
  width: 230px;
  height: 64px;
  padding: 0 19px 0 31px;
  border: 2px solid #8fa0c8;
  border-radius: 6px;
  background: #fff;
  font-size: 23.7px;
  font-weight: 500;
  white-space: nowrap;
}

/* Cards */
.grid { display: grid; grid-template-columns: repeat(4, 512px); gap: 32px; }
.card {
  position: relative;
  height: 720px;
  border: 2px solid #afbbd9;
  border-radius: 6px;
  background: #fff;
  overflow: hidden;
}
.card-head {
  position: relative;
  display: flex;
  align-items: center;
  height: 112px;
  padding: 0 30px 0 39px;
  background: linear-gradient(#dcddec, #ebebf4 50%, #f8f8fa);
}
.card-head.key { padding-left: 30px; }
.card-head > * { position: relative; }
.card-head .facets { position: absolute; inset: 0; width: 508px; height: 112px; }
.card-head h3, .overlay-head h3 {
  flex: 1;
  margin-left: 30px;
  font-size: 26px;
  font-weight: 300;
  line-height: 36px;
  white-space: nowrap;
  -webkit-text-stroke: .4px currentColor;
}
.card-head.key h3 { margin-left: 22px; }
time { font-size: 24.4px; font-weight: 300; -webkit-text-stroke: .4px currentColor; }
.figure { width: 508px; height: 533px; }
.fig { font-family: "Liberation Sans", Arial, sans-serif; font-weight: 700; fill: #111; }
.fig.soft { fill: #333; }
.fig.carlito { font-family: Lato, sans-serif; }
.sub { font-size: 6px; }
.sup { font-size: 4.5px; }
.card-foot {
  display: flex;
  align-items: center;
  height: 71px;
  margin: 0 20px;
  padding: 9px 2px 0 6px;
  border-top: 2px solid #eee;
}
.card-foot strong { flex: 1; margin-left: 15px; font-size: 23.8px; font-weight: 500; }
.tag {
  height: 32px;
  margin-left: 4px;
  border-radius: 6px;
  color: #fff;
  font-size: 17.600px;
  font-weight: 700;
  line-height: 31px;
  text-align: center;
}
.ip { width: 48px; background: #60dba0; }
.ip.wide { width: 50px; }
.wb { width: 62px; background: #00b5b8; }
.oe { width: 56px; background: #2f4566; }
.is { width: 48px; background: #3d5bbf; }

/* Hover overlay */
.overlay {
  position: absolute;
  inset: 0;
  padding: 10px 28px 0;
  border: 2px solid #1f3068;
  border-radius: 4px;
  background: rgba(34, 52, 100, .82);
  color: #fff;
}
.overlay-head {
  display: flex;
  align-items: center;
  height: 90px;
  border-bottom: 2px solid #6c7b9c;
}
.overlay-head h3 { margin-left: 23px; }
.overlay-actions { display: flex; gap: 38px; margin: 36px 0 49px 66px; }
.overlay-actions path {
  fill: none;
  stroke: #fff;
  stroke-width: 2.8;
  stroke-linecap: round;
  stroke-linejoin: round;
}
.overlay p { font-size: 28px; line-height: 40px; white-space: nowrap; }
.overlay .overlay-title { font-size: 27.7px; font-weight: 600; }
.overlay .overlay-author { margin-top: 20px; font-weight: 800; font-size: 27.8px; }

/* Chat launcher */
.chat {
  position: absolute;
  right: 34px;
  bottom: 28px;
  display: flex;
  align-items: center;
  justify-content: center;
  width: 120px;
  height: 120px;
  border-radius: 50%;
  background: linear-gradient(135deg, #4bcdc9 55%, #40a4ca);
  box-shadow: 0 4px 32px rgba(0, 0, 0, .22);
}

.desktop-edge {
  position: absolute;
  top: 0; right: 0; bottom: 0;
  width: 2px;
  background: linear-gradient(#355070, #2f5a85 38%, #2a3350 48%, #3a2a28 60%, #26201f);
}
```
